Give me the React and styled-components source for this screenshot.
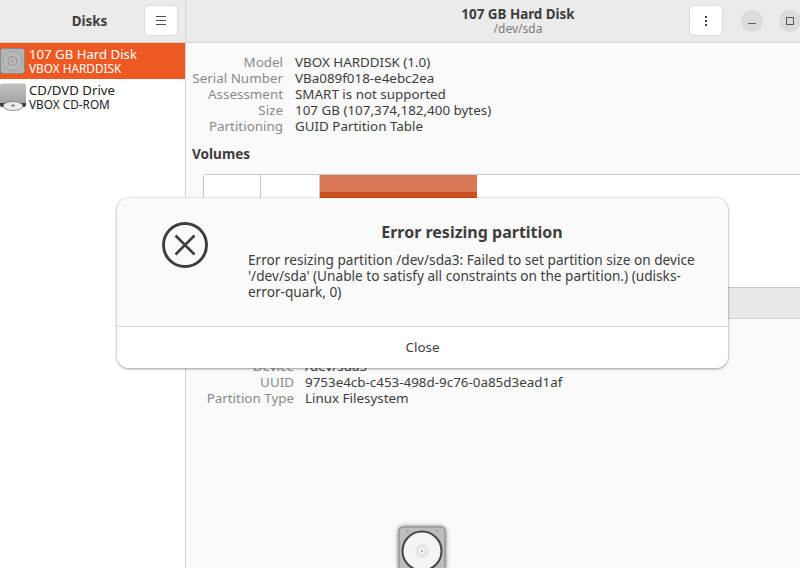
import React from 'react';
import styled, { createGlobalStyle } from 'styled-components';

const Global = createGlobalStyle`
	html, body { margin: 0; padding: 0; height: 100%; }
	body { font-family: 'Noto Sans', 'Open Sans', sans-serif; overflow: hidden; }
	* { box-sizing: border-box; }
`

const Page = styled.div`
	position: relative;
	width: 800px;
	height: 568px;
	overflow: hidden;
	display: grid;
	grid-template-columns: 186px 1fr;
	grid-template-rows: 43px 1fr;
	background: #fafafa;
	color: #3d3d3d;
`
const HeaderLeft = styled.header`
	display: flex;
	align-items: center;
	padding: 0 7px 1px 35px;
	background: #ebebeb;
	border-bottom: 1px solid #d4d4d4;
	border-right: 1px solid #d4d4d4;
`
const HeaderTitle = styled.div`
	flex: 1;
	text-align: center;
	font-size: 13.4px;
	font-weight: 700;
	color: #3d3d3d;
`
const HeaderRight = styled.header`
	display: flex;
	align-items: center;
	gap: 16px;
	padding-bottom: 1px;
	background: #ebebeb;
	border-bottom: 1px solid #d4d4d4;
`
const HeadCenter = styled.div`
	flex: none;
	width: 503px;
	padding-left: 161px;
	margin-right: -16px;
	text-align: center;
	.title { font-size: 13.4px; line-height: 15px; font-weight: 700; color: #3d3d3d; }
	.sub { font-size: 12px; line-height: 13px; color: #7b7b7b; }
`
const HeadButton = styled.button`
	flex: none;
	width: 34px;
	height: 31px;
	padding: 0;
	display: flex;
	align-items: center;
	justify-content: center;
	background: #ffffff;
	border: 1px solid #dcdcdc;
	border-radius: 5px;
`
const MenuButton = styled(HeadButton)`
	margin-right: 2px;
`
const WinButton = styled.div`
	flex: none;
	width: 22px;
	height: 22px;
	border-radius: 50%;
	background: #dcdcdc;
	display: flex;
	align-items: center;
	justify-content: center;
`
const Sidebar = styled.aside`
	background: #ffffff;
	border-right: 1px solid #d4d4d4;
`
const DriveRow = styled.div`
	display: flex;
	align-items: center;
	height: 36px;
	background: ${p => (p.$selected ? '#ee5923' : 'transparent')};
	color: ${p => (p.$selected ? '#ffffff' : '#222222')};
`
const DriveIconSlot = styled.div`
	flex: none;
	width: 29px;
	display: flex;
`
const DriveText = styled.div`
	.name { font-size: 13.2px; line-height: 15px; }
	.model { font-size: 11.8px; line-height: 13px; }
`
const Main = styled.main`
	padding: 11px 0 0 6px;
	background: #fafafa;
`
const Props = styled.dl`
	display: grid;
	grid-template-columns: 91px 1fr;
	column-gap: ${p => p.$gap}px;
	margin: ${p => p.$top || 0}px 0 0 ${p => p.$indent || 0}px;
	font-size: 13.4px;
	line-height: 16px;
	dt { text-align: right; color: #8a8a8a; white-space: nowrap; }
	dd { margin: 0; color: #3d3d3d; white-space: nowrap; }
`
const SectionTitle = styled.h3`
	margin: 11px 0 11px;
	font-size: 13.6px;
	line-height: 18px;
	font-weight: 700;
	color: #3d3d3d;
`
const VolumeStrip = styled.div`
	display: flex;
	height: 114px;
	margin-left: 11px;
	background: #ffffff;
	border: 1px solid #c8c8c8;
	border-right: none;
	border-radius: 3px 0 0 3px;
`
const VolumeCell = styled.div`
	width: ${p => p.$w}px;
	flex: ${p => (p.$w ? 'none' : 1)};
	border-right: ${p => (p.$w && !p.$active ? '1px solid #c8c8c8' : 'none')};
	background: ${p => (p.$active ? 'linear-gradient(#d67654 0, #d87a58 17px, #cf4f1f 17px)' : '#ffffff')};
`
const VolumeBar = styled.div`
	height: 31px;
	margin-left: 11px;
	background: #e8e8e8;
	border-bottom: 1px solid #d4d4d4;
`
const Dialog = styled.div`
	position: absolute;
	left: 117px;
	top: 198px;
	width: 611px;
	height: 170px;
	background: #fafafa;
	border-radius: 12px;
	box-shadow: 0 1px 3px rgba(0, 0, 0, 0.35), 0 0 0 1px rgba(0, 0, 0, 0.05);
	display: flex;
	flex-direction: column;
	overflow: hidden;
`
const DialogBody = styled.div`
	flex: 1;
	display: flex;
	padding: 24px 32px 0 45px;
`
const DialogIcon = styled.div`
	flex: none;
	width: 86px;
`
const DialogText = styled.div`
	flex: 1;
	h2 {
		margin: 0 0 10px;
		text-align: center;
		font-size: 16px;
		line-height: 20px;
		font-weight: 700;
		color: #3d3d3d;
	}
	p {
		margin: 0;
		font-size: 13.65px;
		line-height: 16px;
		color: #3d3d3d;
	}
`
const DialogFooter = styled.button`
	flex: none;
	height: 42px;
	padding: 0 0 2px;
	background: #ffffff;
	border: none;
	border-top: 1px solid #d8d8d8;
	font: inherit;
	font-size: 13.4px;
	color: #3d3d3d;
`
const DragIcon = styled.div`
	position: absolute;
	left: 396px;
	top: 524px;
	filter: drop-shadow(0 0 2px rgba(0, 0, 0, 0.6));
`

const HardDiskIcon = () => (
	<svg width="25" height="26" viewBox="0 0 25 26">
		<rect x="0.5" y="0.5" width="24" height="25" rx="3" fill="#b4b4b4" stroke="#8a8a8a" />
		<circle cx="12.500" cy="13" r="9.500" fill="#bababa" stroke="#a3a3a3" />
		<circle cx="12.500" cy="13" r="4.500" fill="none" stroke="#8d8d8d" />
		<circle cx="12.500" cy="13" r="1" fill="#8d8d8d" />
	</svg>
)

const OpticalIcon = () => (
	<svg width="27" height="28" viewBox="0 0 27 28">
		<defs>
			<linearGradient id="opticalBody" x1="0" y1="0" x2="0" y2="1">
				<stop offset="0" stopColor="#c2c2c2" />
				<stop offset="1" stopColor="#a2a2a2" />
			</linearGradient>
		</defs>
		<path d="M2 0.500h22a2 2 0 0 1 2 2V20a2 2 0 0 1-2 2H2a2 2 0 0 1-2-2V2.500a2 2 0 0 1 2-2z" fill="url(#opticalBody)" />
		<path d="M0 20h26v2a2 2 0 0 1-2 2H2a2 2 0 0 1-2-2z" fill="#3c3c3c" />
		<ellipse cx="13" cy="23" rx="10" ry="4.500" fill="#ececec" stroke="#555" strokeWidth="0.6" />
		<ellipse cx="13" cy="22.500" rx="2" ry="1" fill="#777" />
	</svg>
)

const App = () => {
	return (
		<Page>
			<Global />
			<HeaderLeft>
				<HeaderTitle>Disks</HeaderTitle>
				<HeadButton>
					<svg width="14" height="14" viewBox="0 0 14 14"><path d="M2 2.500h10M2 6.500h10M2 10.500h10" stroke="#4d4d4d" strokeWidth="1" /></svg>
				</HeadButton>
			</HeaderLeft>
			<HeaderRight>
				<HeadCenter>
					<div className="title">107 GB Hard Disk</div>
					<div className="sub">/dev/sda</div>
				</HeadCenter>
				<MenuButton>
					<svg width="14" height="14" viewBox="0 0 14 14"><path d="M7 2v2M7 6v2M7 10v2" stroke="#3d3d3d" strokeWidth="2" /></svg>
				</MenuButton>
				<WinButton>
					<svg width="10" height="10" viewBox="0 0 10 10"><path d="M1 7.500h8" stroke="#666" strokeWidth="1" /></svg>
				</WinButton>
				<WinButton>
					<svg width="10" height="10" viewBox="0 0 10 10"><rect x="1.500" y="1.500" width="7" height="7" fill="none" stroke="#555" /></svg>
				</WinButton>
			</HeaderRight>
			<Sidebar>
				<DriveRow $selected>
					<DriveIconSlot><HardDiskIcon /></DriveIconSlot>
					<DriveText>
						<div className="name">107 GB Hard Disk</div>
						<div className="model">VBOX HARDDISK</div>
					</DriveText>
				</DriveRow>
				<DriveRow>
					<DriveIconSlot><OpticalIcon /></DriveIconSlot>
					<DriveText>
						<div className="name">CD/DVD Drive</div>
						<div className="model">VBOX CD-ROM</div>
					</DriveText>
				</DriveRow>
			</Sidebar>
			<Main>
				<Props $gap={12}>
					<dt>Model</dt><dd>VBOX HARDDISK (1.0)</dd>
					<dt>Serial Number</dt><dd>VBa089f018-e4ebc2ea</dd>
					<dt>Assessment</dt><dd>SMART is not supported</dd>
					<dt>Size</dt><dd>107 GB (107,374,182,400 bytes)</dd>
					<dt>Partitioning</dt><dd>GUID Partition Table</dd>
				</Props>
				<SectionTitle>Volumes</SectionTitle>
				<VolumeStrip>
					<VolumeCell $w={57} />
					<VolumeCell $w={59} />
					<VolumeCell $w={157} $active />
					<VolumeCell />
				</VolumeStrip>
				<VolumeBar />
				<Props $gap={11} $indent={11} $top={39}>
					<dt>Device</dt><dd>/dev/sda3</dd>
					<dt>UUID</dt><dd>9753e4cb-c453-498d-9c76-0a85d3ead1af</dd>
					<dt>Partition Type</dt><dd>Linux Filesystem</dd>
				</Props>
			</Main>
			<Dialog>
				<DialogBody>
					<DialogIcon>
						<svg width="46" height="46" viewBox="0 0 46 46">
							<circle cx="23" cy="23" r="21.500" fill="none" stroke="#3d3d3d" strokeWidth="3" />
							<path d="M13.500 13.500l19 19M32.500 13.500l-19 19" stroke="#3d3d3d" strokeWidth="2.500" />
						</svg>
					</DialogIcon>
					<DialogText>
						<h2>Error resizing partition</h2>
						<p>Error resizing partition /dev/sda3: Failed to set partition size on device '/dev/sda' (Unable to satisfy all constraints on the partition.) (udisks-error-quark, 0)</p>
					</DialogText>
				</DialogBody>
				<DialogFooter>Close</DialogFooter>
			</Dialog>
			<DragIcon>
				<svg width="52" height="44" viewBox="0 0 52 44">
					<rect x="3" y="3" width="46" height="60" rx="4" fill="#bdbdbd" stroke="#8a8a8a" />
					<circle cx="11" cy="7" r="1" fill="#999" />
					<circle cx="41" cy="7" r="1" fill="#999" />
					<circle cx="26" cy="27" r="19.500" fill="#f4f4f4" stroke="#444" strokeWidth="2" />
					<circle cx="26" cy="27" r="6" fill="none" stroke="#e4e4e4" strokeWidth="2" />
					<circle cx="26" cy="27" r="3.500" fill="#fff" stroke="#d0d0d0" />
					<circle cx="26" cy="27" r="1" fill="#888" />
				</svg>
			</DragIcon>
		</Page>
	);
}

export default App;
